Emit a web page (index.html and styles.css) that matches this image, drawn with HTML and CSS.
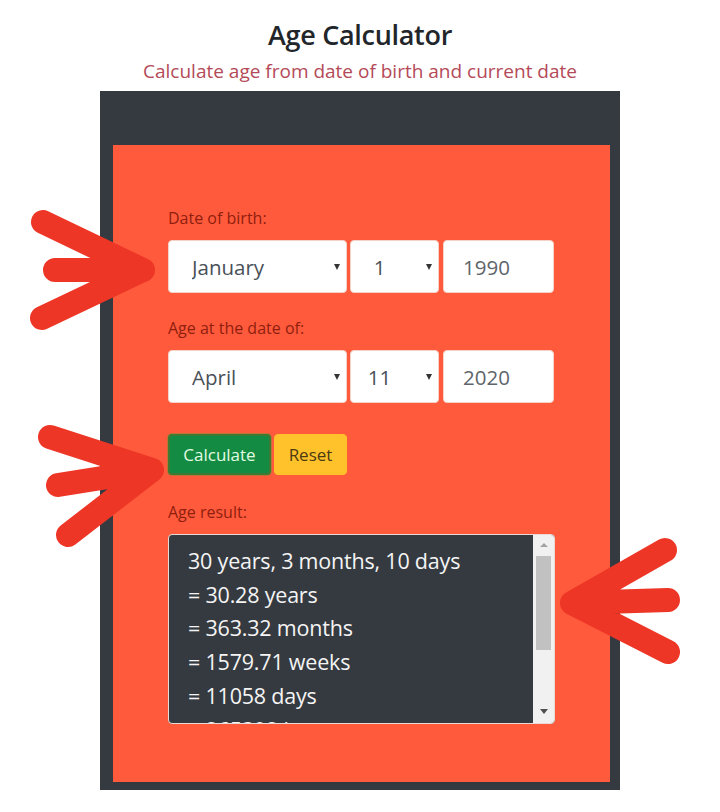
FILE: index.html
```html
<!DOCTYPE html>
<html lang="en">
<head>
<meta charset="utf-8">
<title>Age Calculator</title>
<link rel="stylesheet" href="styles.css">
</head>
<body>
<header class="head">
  <h1 class="title">Age Calculator</h1>
  <p class="subtitle">Calculate age from date of birth and current date</p>
</header>
<main class="panel">
  <section class="card">
    <div class="lbl">Date of birth:</div>
    <div class="row">
      <div class="sel sel-month"><select class="field"><option>January</option></select><span class="caret"></span></div>
      <div class="sel sel-day"><select class="field day"><option>1</option></select><span class="caret"></span></div>
      <input class="field year" value="1990">
    </div>
    <div class="lbl lbl2">Age at the date of:</div>
    <div class="row">
      <div class="sel sel-month"><select class="field"><option>April</option></select><span class="caret"></span></div>
      <div class="sel sel-day"><select class="field day"><option>11</option></select><span class="caret"></span></div>
      <input class="field year" value="2020">
    </div>
    <div class="btns">
      <button class="btn btn-calc">Calculate</button>
      <button class="btn btn-reset">Reset</button>
    </div>
    <div class="lbl lbl3">Age result:</div>
    <div class="result">
      <div class="result-text">
        <div>30 years, 3 months, 10 days</div>
        <div>= 30.28 years</div>
        <div>= 363.32 months</div>
        <div>= 1579.71 weeks</div>
        <div>= 11058 days</div>
        <div>= 265392 hours</div>
      </div>
      <div class="scrollbar">
        <span class="sb-up"></span>
        <span class="sb-thumb"></span>
        <span class="sb-space"></span>
        <span class="sb-down"></span>
      </div>
    </div>
  </section>
</main>
<svg class="arrows" width="720" height="812" viewBox="0 0 720 812" aria-hidden="true">
  <g fill="none" stroke="#ee3626" stroke-width="24" stroke-linecap="round" stroke-linejoin="round">
    <path d="M43 222 L143 270 M55 270 L143 270 M42 318 L143 270"/>
    <path d="M50 437 L152 470 M58 485 L152 470 M68 535 L152 470"/>
    <path d="M665 550 L572 603 M668 600 L572 603 M668 652 L572 603"/>
  </g>
</svg>
</body>
</html>
```

FILE: styles.css
```css
* { box-sizing: border-box; }

html, body {
  margin: 0;
  padding: 0;
  background: #ffffff;
}

body {
  position: relative;
  width: 720px;
  height: 812px;
  overflow: hidden;
  font-family: "Open Sans", "Noto Sans", "Liberation Sans", sans-serif;
  color: #212529;
}

.head {
  padding-top: 18px;
  text-align: center;
}

.title {
  margin: 0;
  font-size: 27px;
  line-height: 34px;
  font-weight: 600;
  color: #22262a;
  letter-spacing: -0.3px;
}

.subtitle {
  margin: 8px 0 0;
  font-size: 19px;
  line-height: 22px;
  color: #b44a58;
  letter-spacing: 0;
}

.panel {
  width: 520px;
  margin: 9px auto 0;
  background: #343a40;
  padding: 54px 10px 8px 13px;
}

.card {
  background: #ff5a3b;
  height: 637px;
  padding: 62px 0 0 55px;
}

.lbl {
  font-size: 16px;
  line-height: 22px;
  color: #8f1e0f;
}

.lbl2 { margin-top: 24px; }
.lbl3 { margin-top: 26px; }

.row {
  display: flex;
  gap: 3px;
  margin-top: 11px;
  height: 53px;
}

.sel {
  position: relative;
  height: 100%;
}

.sel-month { width: 179px; }
.sel-day { width: 89px; margin-right: 1px; }

.field {
  appearance: none;
  -webkit-appearance: none;
  width: 100%;
  height: 100%;
  border: 1px solid #f3d2c8;
  border-radius: 4px;
  background: #ffffff;
  font-family: inherit;
  font-size: 20.5px;
  color: #495057;
  padding: 0 0 0 23px;
  outline: none;
  margin: 0;
}

.field.day {
  text-align-last: center;
  padding: 0 36px 0 6px;
}

.year {
  width: 111px;
  padding-left: 19px;
  color: #5e656b;
}

.caret {
  position: absolute;
  top: 50%;
  margin-top: -3px;
  right: 7px;
  width: 0;
  height: 0;
  border-left: 3.5px solid transparent;
  border-right: 3.5px solid transparent;
  border-top: 6px solid #343434;
  pointer-events: none;
}

.btns {
  display: flex;
  gap: 3px;
  margin-top: 31px;
}

.btn {
  height: 41px;
  border-radius: 4px;
  font-family: inherit;
  font-size: 17px;
  padding: 0;
  margin: 0;
}

.btn-calc {
  width: 103px;
  background: #148b42;
  border: 2px solid #3f7a34;
  color: #e1fbe2;
  box-shadow: 0 0 0 1px rgba(120, 140, 50, 0.5);
}

.btn-reset {
  width: 73px;
  background: #ffc22b;
  border: 1px solid #ffc22b;
  color: #4c3a12;
}

.result {
  margin-top: 11px;
  width: 387px;
  height: 190px;
  display: flex;
  border: 1px solid #eadad5;
  border-radius: 4px;
  background: #343a40;
  overflow: hidden;
}

.result-text {
  flex: 1;
  overflow: hidden;
  padding: 9px 0 0 19px;
  font-size: 21.5px;
  line-height: 33.7px;
  color: #f4f4f4;
  letter-spacing: -0.2px;
}

.scrollbar {
  width: 21px;
  background: #f1f1f1;
  display: flex;
  flex-direction: column;
  align-items: center;
}

.sb-up, .sb-down {
  width: 0;
  height: 0;
  border-left: 4px solid transparent;
  border-right: 4px solid transparent;
}

.sb-up {
  margin-top: 8px;
  border-bottom: 4px solid #a3a3a3;
}

.sb-thumb {
  margin-top: 9px;
  width: 15px;
  height: 94px;
  background: #c1c1c1;
}

.sb-space { flex: 1; }

.sb-down {
  margin-bottom: 9px;
  border-top: 5px solid #505050;
}

.arrows {
  position: absolute;
  left: 0;
  top: 0;
  pointer-events: none;
}
```
